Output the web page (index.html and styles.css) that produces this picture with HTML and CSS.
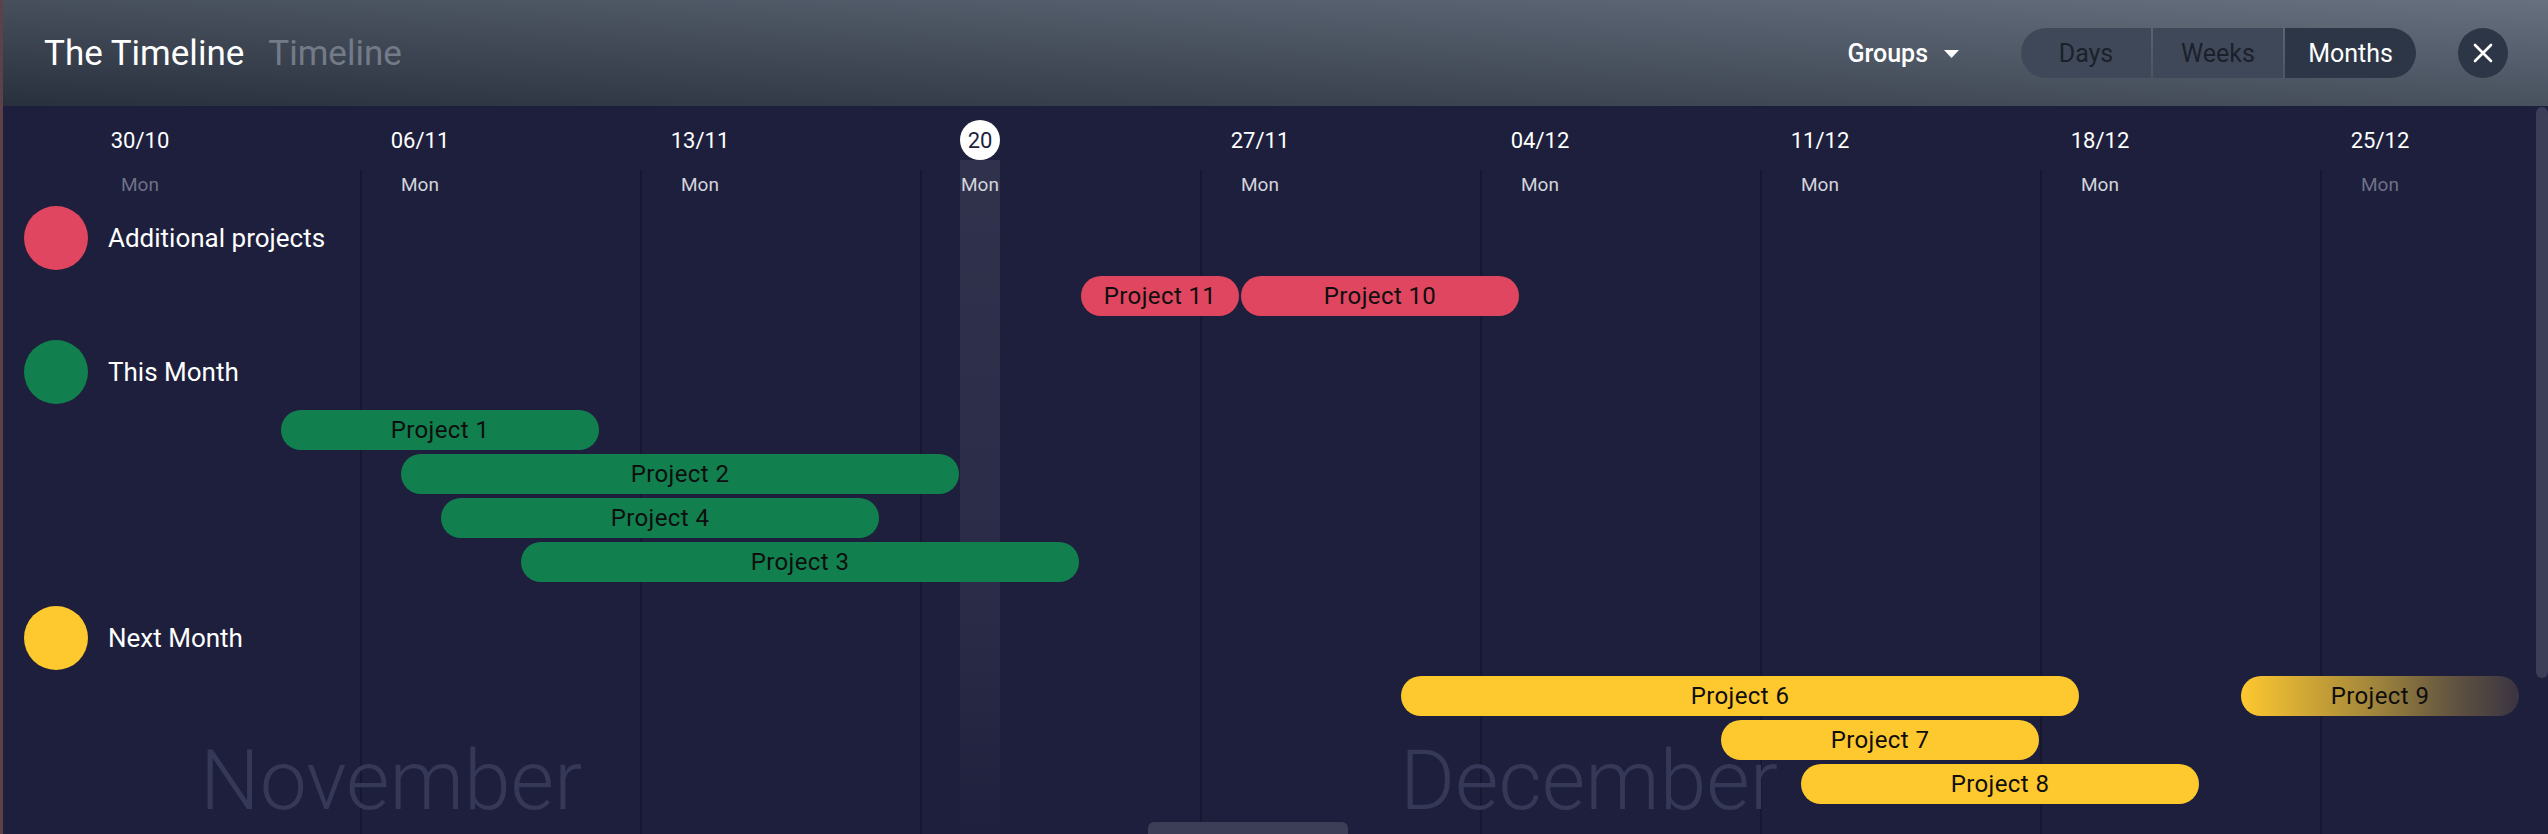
FILE: index.html
```html
<!DOCTYPE html>
<html lang="en">
<head>
<meta charset="utf-8">
<title>The Timeline</title>
<link rel="stylesheet" href="styles.css">
</head>
<body>
<div class="app">
  <header class="topbar">
    <div class="title">
      <span class="title-main">The Timeline</span>
      <span class="title-sub">Timeline</span>
    </div>
    <div class="toolbar">
      <button class="groups-btn" type="button">Groups
        <svg class="caret" width="15" height="8" viewBox="0 0 15 8"><polygon points="0,0 15,0 7.5,8" fill="#fff"/></svg>
      </button>
      <div class="segmented">
        <span class="seg">Days</span>
        <span class="seg">Weeks</span>
        <span class="seg active">Months</span>
      </div>
      <button class="close-btn" type="button" aria-label="Close">
        <svg width="20" height="20" viewBox="0 0 20 20"><path d="M2 2 L18 18 M18 2 L2 18" stroke="#fff" stroke-width="2.6" stroke-linecap="round" fill="none"/></svg>
      </button>
    </div>
  </header>

  <main class="timeline">
    <div class="today-col" style="left:960px"></div>
    <div class="month-label" style="left:200px">November</div>
    <div class="month-label" style="left:1400px">December</div>

    <div class="day-grid date-row">
      <div class="date-cell" style="grid-column:4">30/10</div>
      <div class="date-cell" style="grid-column:11">06/11</div>
      <div class="date-cell" style="grid-column:18">13/11</div>
      <div class="date-cell" style="grid-column:25"><span class="today-badge">20</span></div>
      <div class="date-cell" style="grid-column:32">27/11</div>
      <div class="date-cell" style="grid-column:39">04/12</div>
      <div class="date-cell" style="grid-column:46">11/12</div>
      <div class="date-cell" style="grid-column:53">18/12</div>
      <div class="date-cell" style="grid-column:60">25/12</div>
    </div>
    <div class="day-grid dayname-row">
      <div class="dayname-cell dim" style="grid-column:4">Mon</div>
      <div class="dayname-cell" style="grid-column:11">Mon</div>
      <div class="dayname-cell" style="grid-column:18">Mon</div>
      <div class="dayname-cell" style="grid-column:25">Mon</div>
      <div class="dayname-cell" style="grid-column:32">Mon</div>
      <div class="dayname-cell" style="grid-column:39">Mon</div>
      <div class="dayname-cell" style="grid-column:46">Mon</div>
      <div class="dayname-cell" style="grid-column:53">Mon</div>
      <div class="dayname-cell dim" style="grid-column:60">Mon</div>
    </div>

    <div class="groups">
      <section class="group">
        <div class="group-head"><span class="dot red"></span><span class="group-name">Additional projects</span></div>
        <div class="day-grid bar-rows">
          <div class="bar red" style="grid-column:28 / span 4; grid-row:1">Project 11</div>
          <div class="bar red" style="grid-column:32 / span 7; grid-row:1">Project 10</div>
        </div>
      </section>
      <section class="group">
        <div class="group-head"><span class="dot green"></span><span class="group-name">This Month</span></div>
        <div class="day-grid bar-rows">
          <div class="bar green" style="grid-column:8 / span 8; grid-row:1">Project 1</div>
          <div class="bar green" style="grid-column:11 / span 14; grid-row:2">Project 2</div>
          <div class="bar green" style="grid-column:12 / span 11; grid-row:3">Project 4</div>
          <div class="bar green" style="grid-column:14 / span 14; grid-row:4">Project 3</div>
        </div>
      </section>
      <section class="group">
        <div class="group-head"><span class="dot yellow"></span><span class="group-name">Next Month</span></div>
        <div class="day-grid bar-rows">
          <div class="bar yellow" style="grid-column:36 / span 17; grid-row:1">Project 6</div>
          <div class="bar yellow fading" style="grid-column:57 / span 7; grid-row:1">Project 9</div>
          <div class="bar yellow" style="grid-column:44 / span 8; grid-row:2">Project 7</div>
          <div class="bar yellow" style="grid-column:46 / span 10; grid-row:3">Project 8</div>
        </div>
      </section>
    </div>

    <div class="vscroll"></div>
    <div class="hscroll"></div>
  </main>
</div>
</body>
</html>
```

FILE: styles.css
```css
html, body {
  margin: 0;
  padding: 0;
}

body {
  width: 2548px;
  height: 834px;
  overflow: hidden;
  background: #1d1f3c;
  font-family: Roboto, "Noto Sans", "Liberation Sans", sans-serif;
}

.app {
  position: relative;
  height: 834px;
}

.app::before {
  content: "";
  position: absolute;
  left: 0;
  top: 0;
  bottom: 0;
  width: 3px;
  background: #5c4148;
  z-index: 5;
}

/* ---------- Top bar ---------- */
.topbar {
  box-sizing: border-box;
  height: 106px;
  display: flex;
  align-items: center;
  padding: 0 40px 0 44px;
  background: linear-gradient(2.5deg, #29303d 0%, #66707e 100%);
}

.title {
  display: flex;
  align-items: baseline;
  font-size: 35px;
}

.title-main {
  color: #ffffff;
}

.title-sub {
  color: #737b89;
  margin-left: 24px;
}

.toolbar {
  margin-left: auto;
  display: flex;
  align-items: center;
}

.groups-btn {
  display: flex;
  align-items: center;
  gap: 16px;
  padding: 0;
  border: 0;
  background: none;
  color: #ffffff;
  font-family: inherit;
  font-size: 25px;
  font-weight: 500;
}

.caret {
  display: block;
  margin-top: 1px;
}

.segmented {
  margin-left: 62px;
  display: flex;
  gap: 2px;
  border-radius: 25px;
  overflow: hidden;
}

.seg {
  width: 130px;
  height: 50px;
  display: flex;
  align-items: center;
  justify-content: center;
  font-size: 25px;
  color: #1b202b;
  background: #3f4858;
}

.seg.active {
  width: 131px;
  background: #2d3646;
  color: #ffffff;
}

.close-btn {
  margin-left: 42px;
  width: 50px;
  height: 50px;
  border-radius: 50%;
  border: 0;
  padding: 0;
  background: #2d3646;
  display: flex;
  align-items: center;
  justify-content: center;
}

/* ---------- Timeline ---------- */
.timeline {
  position: relative;
  box-sizing: border-box;
  height: 728px;
  overflow: hidden;
  padding-top: 14px;
  background-image: repeating-linear-gradient(to right, #161830 0px, #161830 2px, transparent 2px, transparent 280px);
  background-size: 2240px 100%;
  background-position: 360px 64px;
  background-repeat: no-repeat;
}

.today-col {
  position: absolute;
  top: 54px;
  width: 40px;
  height: 690px;
  background: linear-gradient(to bottom, rgba(255, 255, 255, 0.085) 0%, rgba(255, 255, 255, 0.06) 65%, rgba(255, 255, 255, 0) 100%);
  z-index: 0;
}

.month-label {
  position: absolute;
  top: 633px;
  font-size: 84px;
  line-height: 84px;
  font-weight: 300;
  color: #353857;
  white-space: nowrap;
  z-index: 0;
}

.day-grid {
  display: grid;
  grid-template-columns: repeat(64, 40px);
}

.date-row,
.dayname-row {
  position: relative;
  z-index: 1;
}

.date-cell {
  height: 40px;
  display: flex;
  align-items: center;
  justify-content: center;
  font-size: 22px;
  color: #ffffff;
  white-space: nowrap;
}

.today-badge {
  flex: none;
  width: 40px;
  height: 40px;
  border-radius: 50%;
  background: #ffffff;
  color: #1d1f3c;
  display: flex;
  align-items: center;
  justify-content: center;
}

.dayname-row {
  margin-top: 4px;
}

.dayname-cell {
  height: 40px;
  display: flex;
  align-items: center;
  justify-content: center;
  font-size: 19px;
  color: #d3d4dc;
  white-space: nowrap;
}

.dayname-cell.dim {
  color: #6e7187;
}

/* ---------- Groups ---------- */
.groups {
  position: relative;
  z-index: 1;
  margin-top: 2px;
}

.group + .group {
  margin-top: 24px;
}

.group-head {
  height: 64px;
  display: flex;
  align-items: center;
  gap: 20px;
  padding-left: 24px;
}

.dot {
  width: 64px;
  height: 64px;
  border-radius: 50%;
  flex: none;
}

.group-name {
  font-size: 26px;
  color: #ffffff;
  white-space: nowrap;
}

.bar-rows {
  margin-top: 6px;
  grid-auto-rows: 40px;
  row-gap: 4px;
}

.bar {
  margin: 0 1px;
  border-radius: 20px;
  display: flex;
  align-items: center;
  justify-content: center;
  font-size: 24px;
  letter-spacing: 0.4px;
  color: #0e0e0e;
  white-space: nowrap;
}

.red { background: #e0465f; }
.green { background: #11804e; }
.yellow { background: #fec82f; }

.bar.fading {
  background: linear-gradient(to right, #fec82f 0%, #d2a935 22%, #9c823c 50%, #5e5140 78%, #3a3442 100%);
}

/* ---------- Scrollbars ---------- */
.vscroll {
  position: absolute;
  right: 0;
  top: 1px;
  width: 12px;
  height: 571px;
  border-radius: 6px;
  background: #3c3e58;
  z-index: 2;
}

.hscroll {
  position: absolute;
  left: 1148px;
  bottom: 0;
  width: 200px;
  height: 12px;
  border-radius: 6px 6px 0 0;
  background: #3c3e58;
  z-index: 2;
}
```
